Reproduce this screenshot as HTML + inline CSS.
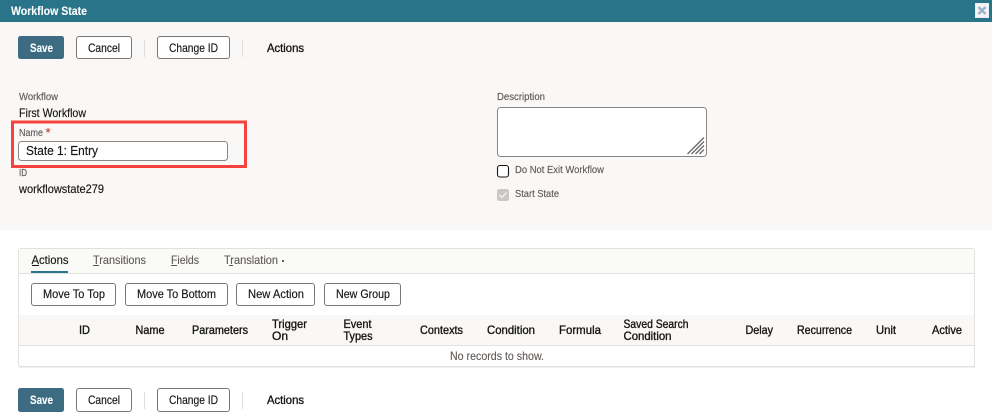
<!DOCTYPE html>
<html><head><meta charset="utf-8"><title>Workflow State</title>
<style>
html,body{margin:0;padding:0;background:#fff;width:992px;height:419px;overflow:hidden}
svg{display:block}
text{font-family:"Liberation Sans",sans-serif;font-size:12px;fill:#161513;stroke:#161513;stroke-width:.15px;white-space:pre}
text.b{stroke-width:.35px}
text.l{font-size:10.5px;fill:#5f5a57;stroke:#5f5a57;stroke-width:.15px}
text.t{font-size:12px;fill:#5f5a57;stroke:#5f5a57;stroke-width:.12px}
text.w{fill:#fff;stroke:#fff;stroke-width:.1px;font-weight:bold;font-size:12px}
.btn{fill:#fff;stroke:#7a7775;stroke-width:1}
</style></head><body>
<svg width="992" height="419" viewBox="0 0 992 419" xmlns="http://www.w3.org/2000/svg">
<rect width="992" height="419" fill="#fff"/>
<rect y="22" width="992" height="208" fill="#f9f8f6"/>
<rect width="992" height="22" fill="#2a7489"/>
<text class="w" x="11" y="15" textLength="76" lengthAdjust="spacingAndGlyphs">Workflow State</text>
<rect x="975.5" y="3.5" width="13" height="14" fill="#f4f4f4" stroke="#e8eef2"/>
<path d="M978.500 7l7 7M985.500 7l-7 7" stroke="#9db2cb" stroke-width="2.6" fill="none"/>

<!-- top toolbar -->
<rect x="18" y="36" width="46" height="23" rx="2.5" fill="#3d6c82"/>
<text class="w" x="30" y="52" textLength="23" lengthAdjust="spacingAndGlyphs">Save</text>
<rect class="btn" x="76.500" y="36.5" width="55" height="22" rx="2.5"/>
<text x="88" y="52" textLength="32" lengthAdjust="spacingAndGlyphs">Cancel</text>
<rect x="144" y="40" width="1" height="17" fill="#e0dedb"/>
<rect class="btn" x="157.500" y="36.5" width="72" height="22" rx="2.5"/>
<text x="169" y="52" textLength="49" lengthAdjust="spacingAndGlyphs">Change ID</text>
<rect x="242" y="40" width="1" height="17" fill="#e0dedb"/>
<text x="267" y="52" textLength="37" lengthAdjust="spacingAndGlyphs" class="b">Actions</text>

<!-- left fields -->
<text class="l" x="19" y="100" textLength="39" lengthAdjust="spacingAndGlyphs">Workflow</text>
<text x="19" y="117" textLength="67" lengthAdjust="spacingAndGlyphs">First Workflow</text>
<text class="l" x="19" y="136" textLength="24" lengthAdjust="spacingAndGlyphs">Name</text>
<text x="45.500" y="137" style="font-size:13px;fill:#c13d2f;stroke:#c13d2f">*</text>
<rect x="18.500" y="141.5" width="209" height="19" rx="3" fill="#fff" stroke="#8a8785"/>
<text x="26" y="155" textLength="72" lengthAdjust="spacingAndGlyphs" style="font-size:13px">State 1: Entry</text>
<rect x="12.500" y="122" width="233" height="44.5" fill="none" stroke="#f6423f" stroke-width="3"/>
<text class="l" x="19" y="176" textLength="8" lengthAdjust="spacingAndGlyphs">ID</text>
<text x="19" y="193" textLength="85" lengthAdjust="spacingAndGlyphs">workflowstate279</text>

<!-- right fields -->
<text class="l" x="497" y="100" textLength="48" lengthAdjust="spacingAndGlyphs">Description</text>
<rect x="497.500" y="107.5" width="209" height="49" rx="3" fill="#fff" stroke="#8a8785"/>
<path d="M687.500 154l16.500-16.500M691.500 154l12.500-12.500M695.500 154l8.500-8.500M699.500 154l4.500-4.500" stroke="#6f6c6a" stroke-width="1.4" fill="none"/>
<rect x="497.500" y="165.5" width="11" height="11.5" rx="2.5" fill="#fff" stroke="#161513" stroke-width="1.1"/>
<text class="l" x="515" y="173" textLength="89" lengthAdjust="spacingAndGlyphs">Do Not Exit Workflow</text>
<rect x="497" y="189" width="12" height="12" rx="2.5" fill="#c9c8c6"/>
<path d="M499.500 195l2.500 2.500 4.500-5" stroke="#f2f1ef" stroke-width="1.4" fill="none"/>
<text class="l" x="515" y="197" textLength="44" lengthAdjust="spacingAndGlyphs">Start State</text>

<!-- panel -->
<rect x="18.500" y="248.5" width="956" height="118" rx="2.5" fill="#fff" stroke="#e3e1de"/>
<rect x="19" y="249" width="955" height="24" fill="#fafaf9"/>
<rect x="19" y="273" width="955" height="1" fill="#e3e1de"/>
<text x="31.500" y="264" textLength="37" lengthAdjust="spacingAndGlyphs">Actions</text>
<rect x="32" y="265" width="7" height="1" fill="#161513"/>
<rect x="31" y="271" width="37" height="2" fill="#2a7489"/>
<text class="t" x="93" y="264" textLength="53" lengthAdjust="spacingAndGlyphs">Transitions</text>
<rect x="93" y="265" width="6" height="1" fill="#5f5a57"/>
<text class="t" x="171" y="264" textLength="28" lengthAdjust="spacingAndGlyphs">Fields</text>
<rect x="171" y="265" width="6" height="1" fill="#5f5a57"/>
<text class="t" x="224" y="264" textLength="54" lengthAdjust="spacingAndGlyphs">Translation</text>
<rect x="229" y="265" width="4" height="1" fill="#5f5a57"/>
<rect x="282" y="260" width="2" height="2" fill="#5f5a57"/>

<rect class="btn" x="31.500" y="283.5" width="84" height="22" rx="2.5"/>
<text x="43" y="298" textLength="62" lengthAdjust="spacingAndGlyphs">Move To Top</text>
<rect class="btn" x="125.500" y="283.5" width="102" height="22" rx="2.5"/>
<text x="137" y="298" textLength="79" lengthAdjust="spacingAndGlyphs">Move To Bottom</text>
<rect class="btn" x="236.500" y="283.5" width="78" height="22" rx="2.5"/>
<text x="248" y="298" textLength="56" lengthAdjust="spacingAndGlyphs">New Action</text>
<rect class="btn" x="324.500" y="283.5" width="76" height="22" rx="2.5"/>
<text x="336" y="298" textLength="54" lengthAdjust="spacingAndGlyphs">New Group</text>

<rect x="19" y="315" width="955" height="30" fill="#f9f8f6"/>
<rect x="19" y="345" width="955" height="1" fill="#e3e1de"/>
<rect x="19" y="366" width="956" height="1.5" fill="#e3e1de"/>
<text class="b" x="79" y="334" textLength="11" lengthAdjust="spacingAndGlyphs">ID</text>
<text class="b" x="135.500" y="334" textLength="29" lengthAdjust="spacingAndGlyphs">Name</text>
<text class="b" x="192" y="334" textLength="56" lengthAdjust="spacingAndGlyphs">Parameters</text>
<text class="b" x="272" y="328" textLength="35" lengthAdjust="spacingAndGlyphs">Trigger</text>
<text class="b" x="272" y="340" textLength="16" lengthAdjust="spacingAndGlyphs">On</text>
<text class="b" x="343.500" y="328" textLength="28" lengthAdjust="spacingAndGlyphs">Event</text>
<text class="b" x="343.500" y="340" textLength="29" lengthAdjust="spacingAndGlyphs">Types</text>
<text class="b" x="420" y="334" textLength="43" lengthAdjust="spacingAndGlyphs">Contexts</text>
<text class="b" x="487" y="334" textLength="48" lengthAdjust="spacingAndGlyphs">Condition</text>
<text class="b" x="559" y="334" textLength="42" lengthAdjust="spacingAndGlyphs">Formula</text>
<text class="b" x="623.500" y="328" textLength="65" lengthAdjust="spacingAndGlyphs">Saved Search</text>
<text class="b" x="623.500" y="340" textLength="48" lengthAdjust="spacingAndGlyphs">Condition</text>
<text class="b" x="745.500" y="334" textLength="27.500" lengthAdjust="spacingAndGlyphs">Delay</text>
<text class="b" x="797" y="334" textLength="55" lengthAdjust="spacingAndGlyphs">Recurrence</text>
<text class="b" x="876" y="334" textLength="20" lengthAdjust="spacingAndGlyphs">Unit</text>
<text class="b" x="932" y="334" textLength="30" lengthAdjust="spacingAndGlyphs">Active</text>
<text class="t" x="450" y="360" textLength="94" lengthAdjust="spacingAndGlyphs">No records to show.</text>

<!-- bottom toolbar -->
<rect x="18" y="388" width="46" height="24" rx="2.5" fill="#3d6c82"/>
<text class="w" x="30" y="404" textLength="23" lengthAdjust="spacingAndGlyphs">Save</text>
<rect class="btn" x="76.500" y="388.5" width="55" height="23" rx="2.5"/>
<text x="88" y="404" textLength="32" lengthAdjust="spacingAndGlyphs">Cancel</text>
<rect x="144" y="392" width="1" height="17" fill="#e0dedb"/>
<rect class="btn" x="157.500" y="388.5" width="72" height="23" rx="2.5"/>
<text x="169" y="404" textLength="49" lengthAdjust="spacingAndGlyphs">Change ID</text>
<rect x="242" y="392" width="1" height="17" fill="#e0dedb"/>
<text x="267" y="404" textLength="37" lengthAdjust="spacingAndGlyphs" class="b">Actions</text>
</svg>
</body></html>
